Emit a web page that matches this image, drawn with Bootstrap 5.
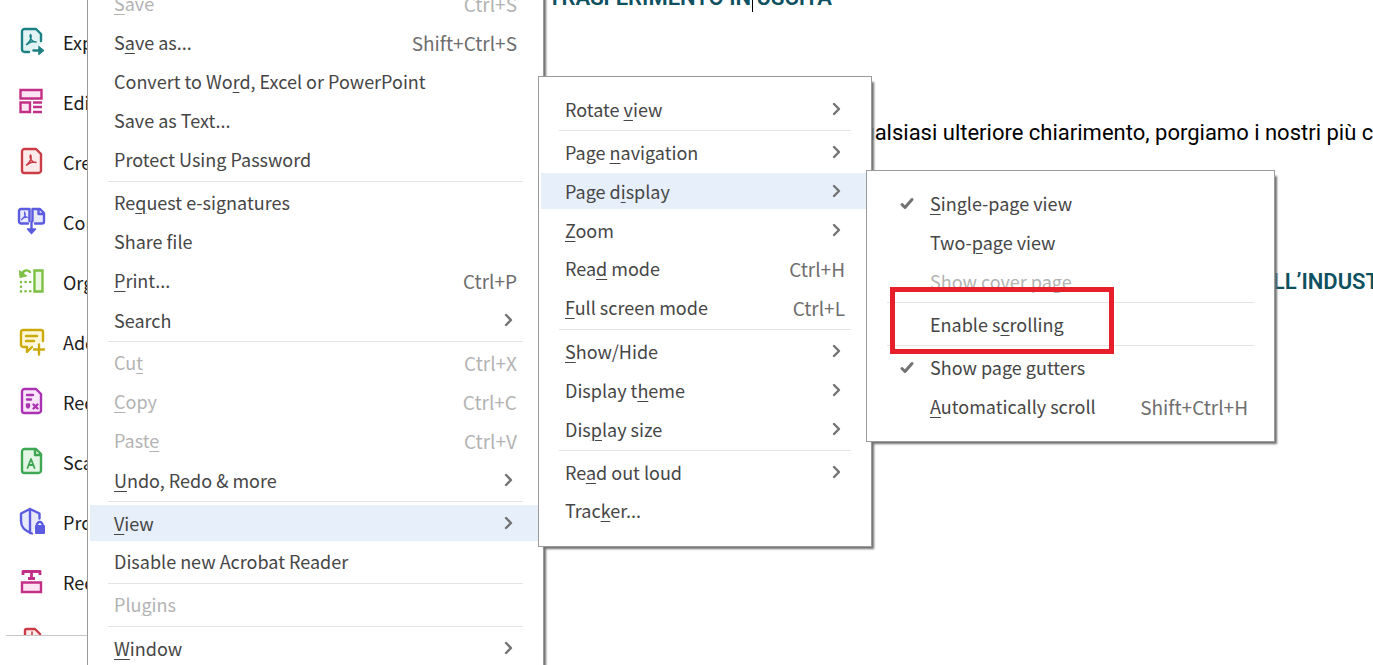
<!DOCTYPE html>
<html lang="en">
<head>
<meta charset="utf-8">
<meta name="viewport" content="width=device-width, initial-scale=1">
<title>Acrobat Reader – View menu</title>
<link href="https://cdn.jsdelivr.net/npm/bootstrap@5.3.0/dist/css/bootstrap.min.css" rel="stylesheet">
<style>
  body { font-family: "Noto Sans CJK SC", "Noto Sans", sans-serif; font-size: 18px; color: #464646; background: #fff; }
  .app { height: 100vh; }

  /* tool list at the left */
  .tools { width: 88px; flex: none; }
  .tool-list { height: 636px; margin-left: 6px; padding-top: 12px; border-bottom: 1px solid #c6c6c6; }
  .tool { height: 60px; padding-left: 9px; color: #1c1c1c; white-space: nowrap; text-decoration: none; }
  .tool svg { width: 32px; height: 32px; margin-right: 16px; flex: none; fill: none; stroke: currentColor; stroke-width: 2.4; stroke-linejoin: round; stroke-linecap: round; }
  .teal { color: #1d8084; } .pink { color: #c22f86; } .crimson { color: #cb3d46; } .indigo { color: #5c5ce0; }
  .lime { color: #7cc043; } .gold { color: #ccaa0c; } .violet { color: #a933b0; } .leaf { color: #3fa653; }

  /* page of the open document */
  .doc { font-family: Roboto, sans-serif; font-size: 22px; line-height: 26px; color: #000; white-space: nowrap; min-width: 0; }
  .doc h2 { font-size: 22px; line-height: 26px; font-weight: 600; color: #0e5161; }
  .doc .first { margin: -15px 0 0 460px; }
  .doc .para { margin: 109px 0 0 762px; }
  .doc .second { margin: 123px 0 0 1158px; }
  .caret { left: 204px; top: 0; width: 1px; height: 27px; background: #000; }

  /* menus */
  .menu { gap: 3px; padding: 14px 2px 17px; background: #fff; border: 1px solid #9b9b9b; box-shadow: 4px 4px 2px -2px #707070; }
  .menu-main { left: 87px; top: -29px; bottom: -40px; width: 457px; }
  .menu-view { left: 538px; top: 76px; width: 334px; }
  .menu-display { left: 866px; top: 170px; width: 409px; }
  .entry { height: 36px; flex: none; padding: 0 24px; border: 0; background: none; color: #464646; line-height: 35px; white-space: nowrap; text-align: left; }
  .entry:not(.d-flex) { padding-bottom: 1px; }
  .menu-display .entry { padding-left: 29px; }
  .entry:disabled { color: #b3b3b3; }
  .entry.open { background: #e6effa; }
  .entry kbd { padding: 0; background: none; color: #6e6e6e; font: inherit; font-size: 19px; }
  .entry:disabled kbd { color: #b3b3b3; }
  .entry u { text-decoration-thickness: 1px; text-underline-offset: 3px; }
  .entry svg { fill: none; stroke: #737373; stroke-width: 2.4; stroke-linecap: round; stroke-linejoin: round; }
  .chev { width: 10px; height: 14px; margin-right: 3px; }
  .tick { width: 32px; height: 14px; flex: none; }
  .entry .tick { stroke-width: 3; }
  .rule { height: 1px; flex: none; margin: 0 18px; background: #e4e4e4; }
  .callout { left: 23px; top: 116px; width: 224px; height: 67px; border: 5px solid #e61f2a; pointer-events: none; }
</style>
</head>
<body>
<div class="app position-relative overflow-hidden d-flex">
  <nav class="tools overflow-hidden" aria-label="Tools">
    <div class="tool-list overflow-hidden">
      <a href="#" class="tool d-flex align-items-center"><svg class="teal" viewBox="0 0 32 32"><path fill="#e2f3f3" stroke="none" d="M7 3h14l5 5v10l-9 8H7z"/><path d="M14 26H9.500a2.500 2.500 0 0 1-2.500-2.500V5.500A2.500 2.500 0 0 1 9.500 3H21l5 5v7"/><path stroke-width="1.500" d="M15.500 8.500c2 3-1 8-4 10M15 9.500c0 4 3 6.500 6 6.500-3-1-7 0-9 2.500"/><path d="M18.500 24.500h8"/><path fill="currentColor" stroke-width="1" d="M24 20.500l5 4-5 4z"/></svg>Export</a>
      <a href="#" class="tool d-flex align-items-center"><svg class="pink" viewBox="0 0 32 32"><path fill="#fce4f3" stroke-linejoin="miter" d="M5.500 4h21v8.500h-21zM5.500 16.500h9.500v9.500H5.500z"/><path stroke-linecap="butt" d="M18 16.500h9M18 21h9M18 26h9"/></svg>Edit</a>
      <a href="#" class="tool d-flex align-items-center"><svg class="crimson" viewBox="0 0 32 32"><path fill="#fdeaea" d="M9.500 3H21l5 5v16.500a2.500 2.500 0 0 1-2.500 2.500h-14A2.500 2.500 0 0 1 7 24.500v-19A2.500 2.500 0 0 1 9.500 3z"/><path stroke-width="1.500" d="M15.500 9c2 3-1 8-4 10M15 10c0 4 3 6.500 6 6.500-3-1-7 0-9 2.500"/></svg>Create</a>
      <a href="#" class="tool d-flex align-items-center"><svg class="indigo" viewBox="0 0 32 32"><path fill="#e9e9fc" stroke="none" d="M4 3h21l4 4v10H4z"/><path d="M13 17.500H6a2 2 0 0 1-2-2V5a2 2 0 0 1 2-2h8.500v12M17.500 15V3H25l4 4v8.500a2 2 0 0 1-2 2h-7M23.500 3v5H29"/><path stroke-width="1.200" d="M9.500 6c2 3-1 6-3 7.500M9.500 7c0 3 2 4.500 4 4.500-3-1-5 0-7 2"/><path d="M16.500 16v10"/><path stroke-width="1.500" d="M12.500 23l4 4.500 4-4.500z" fill="currentColor"/></svg>Combine</a>
      <a href="#" class="tool d-flex align-items-center"><svg class="lime" viewBox="0 0 32 32"><path fill="#ecf8e2" stroke-linejoin="miter" d="M19.500 4.500h8v21h-8z"/><path d="M15 6c-3-3-7-2-9 4"/><path fill="currentColor" stroke-width="1" d="M4.500 5l.5 6.500 6.500-1.500z"/><path stroke-dasharray=".1 4.600" stroke-width="2.600" d="M6 16v10M10.500 16h5M10.500 25.200h5"/></svg>Organize</a>
      <a href="#" class="tool d-flex align-items-center"><svg class="gold" viewBox="0 0 32 32"><path fill="#fff8d8" d="M17 21l-5 5v-5H8a2.500 2.500 0 0 1-2-2V6a2 2 0 0 1 2-2h18a2 2 0 0 1 2 2v9"/><path d="M11 10h11M11 15h8M24 18.500v10M19 23.500h10"/></svg>Add</a>
      <a href="#" class="tool d-flex align-items-center"><svg class="violet" viewBox="0 0 32 32"><path fill="#f9e5fa" d="M9.500 3H21l5 5v16.500a2.500 2.500 0 0 1-2.500 2.500h-14A2.500 2.500 0 0 1 7 24.500v-19A2.500 2.500 0 0 1 9.500 3z"/><path d="M12 9h6M12 13.500h4M12 18.500v2q1 2 2 0v-2zM18.500 18.500l4 4M22.500 18.500l-4 4"/></svg>Request</a>
      <a href="#" class="tool d-flex align-items-center"><svg class="leaf" viewBox="0 0 32 32"><path fill="#e3f5e5" d="M9.500 3H21l5 5v16.500a2.500 2.500 0 0 1-2.500 2.500h-14A2.500 2.500 0 0 1 7 24.500v-19A2.500 2.500 0 0 1 9.500 3z"/><path d="M20 3v6h6"/><path stroke-width="1.800" d="M12.500 22l3.500-9 3.500 9M14 19h4"/></svg>Scan</a>
      <a href="#" class="tool d-flex align-items-center"><svg class="indigo" viewBox="0 0 32 32"><path fill="#e9e9fc" stroke="none" d="M6 7l9-4 9 4v9l-7 11C10 25 6 21 6 15z"/><path d="M17 27.500C9 24 6 21 6 15V7.500L15 3l9.500 4.500v5M15 3v24"/><path fill="currentColor" stroke-width="2" d="M21 20h8v7h-8z"/><path d="M22 20v-2q3-4.500 5.500 0v2"/></svg>Protect</a>
      <a href="#" class="tool d-flex align-items-center"><svg class="pink" viewBox="0 0 32 32"><path fill="#fce4f3" stroke-linejoin="miter" d="M7 16.500h19v9.500H7z"/><path stroke-linecap="butt" stroke-width="2.800" d="M8 9V5.500h17V9M16.500 5v8M13 12.500h7"/></svg>Redact</a>
      <a href="#" class="tool d-flex align-items-center" aria-label="Compress a PDF"><svg class="crimson" viewBox="0 0 32 32"><path fill="#fdeaea" d="M10 27V4.500A1.500 1.500 0 0 1 11.500 3H20l5 5v19z"/><path stroke-width="1.500" d="M17 6v5"/></svg></a>
    </div>
  </nav>

  <main class="doc flex-grow-1">
    <h2 class="first position-relative">TRASFERIMENTO IN USCITA<span class="caret position-absolute"></span></h2>
    <p class="para">qualsiasi ulteriore chiarimento, porgiamo i nostri più cordiali saluti</p>
    <h2 class="second">DELL’INDUSTRIA</h2>
  </main>

  <div class="menu menu-main position-absolute d-flex flex-column" role="menu">
    <button class="entry d-flex justify-content-between" disabled><span><u>S</u>ave</span><kbd>Ctrl+S</kbd></button>
    <button class="entry d-flex justify-content-between"><span>S<u>a</u>ve as...</span><kbd>Shift+Ctrl+S</kbd></button>
    <button class="entry"><span>Convert to Wo<u>r</u>d, Excel or PowerPoint</span></button>
    <button class="entry">Save as Text...</button>
    <button class="entry">Protect Using Password</button>
    <div class="rule"></div>
    <button class="entry"><span>Re<u>q</u>uest e-signatures</span></button>
    <button class="entry">Share file</button>
    <button class="entry d-flex justify-content-between"><span><u>P</u>rint...</span><kbd>Ctrl+P</kbd></button>
    <button class="entry d-flex justify-content-between align-items-center">Search<svg class="chev" viewBox="0 0 10 14"><path d="M2 2l5 5-5 5"/></svg></button>
    <div class="rule"></div>
    <button class="entry d-flex justify-content-between" disabled><span>Cu<u>t</u></span><kbd>Ctrl+X</kbd></button>
    <button class="entry d-flex justify-content-between" disabled><span><u>C</u>opy</span><kbd>Ctrl+C</kbd></button>
    <button class="entry d-flex justify-content-between" disabled><span>Past<u>e</u></span><kbd>Ctrl+V</kbd></button>
    <button class="entry d-flex justify-content-between align-items-center"><span><u>U</u>ndo, Redo &amp; more</span><svg class="chev" viewBox="0 0 10 14"><path d="M2 2l5 5-5 5"/></svg></button>
    <div class="rule"></div>
    <button class="entry open d-flex justify-content-between align-items-center"><span><u>V</u>iew</span><svg class="chev" viewBox="0 0 10 14"><path d="M2 2l5 5-5 5"/></svg></button>
    <button class="entry">Disable new Acrobat Reader</button>
    <div class="rule"></div>
    <button class="entry" disabled><span>Plu<u>g</u>ins</span></button>
    <div class="rule"></div>
    <button class="entry d-flex justify-content-between align-items-center"><span><u>W</u>indow</span><svg class="chev" viewBox="0 0 10 14"><path d="M2 2l5 5-5 5"/></svg></button>
  </div>

  <div class="menu menu-view position-absolute d-flex flex-column" role="menu">
    <button class="entry d-flex justify-content-between align-items-center"><span>Rotate <u>v</u>iew</span><svg class="chev" viewBox="0 0 10 14"><path d="M2 2l5 5-5 5"/></svg></button>
    <div class="rule"></div>
    <button class="entry d-flex justify-content-between align-items-center"><span>Page <u>n</u>avigation</span><svg class="chev" viewBox="0 0 10 14"><path d="M2 2l5 5-5 5"/></svg></button>
    <button class="entry open d-flex justify-content-between align-items-center"><span>Page d<u>i</u>splay</span><svg class="chev" viewBox="0 0 10 14"><path d="M2 2l5 5-5 5"/></svg></button>
    <button class="entry d-flex justify-content-between align-items-center"><span><u>Z</u>oom</span><svg class="chev" viewBox="0 0 10 14"><path d="M2 2l5 5-5 5"/></svg></button>
    <button class="entry d-flex justify-content-between"><span>Rea<u>d</u> mode</span><kbd>Ctrl+H</kbd></button>
    <button class="entry d-flex justify-content-between"><span><u>F</u>ull screen mode</span><kbd>Ctrl+L</kbd></button>
    <div class="rule"></div>
    <button class="entry d-flex justify-content-between align-items-center"><span><u>S</u>how/Hide</span><svg class="chev" viewBox="0 0 10 14"><path d="M2 2l5 5-5 5"/></svg></button>
    <button class="entry d-flex justify-content-between align-items-center"><span>Display t<u>h</u>eme</span><svg class="chev" viewBox="0 0 10 14"><path d="M2 2l5 5-5 5"/></svg></button>
    <button class="entry d-flex justify-content-between align-items-center"><span>Dis<u>p</u>lay size</span><svg class="chev" viewBox="0 0 10 14"><path d="M2 2l5 5-5 5"/></svg></button>
    <div class="rule"></div>
    <button class="entry d-flex justify-content-between align-items-center"><span>Re<u>a</u>d out loud</span><svg class="chev" viewBox="0 0 10 14"><path d="M2 2l5 5-5 5"/></svg></button>
    <button class="entry"><span>Trac<u>k</u>er...</span></button>
  </div>

  <div class="menu menu-display position-absolute d-flex flex-column" role="menu">
    <button class="entry d-flex align-items-center" role="menuitemcheckbox" aria-checked="true"><svg class="tick" viewBox="0 0 32 14"><path d="M4 8.500l3 3 7-8"/></svg><span><u>S</u>ingle-page view</span></button>
    <button class="entry d-flex align-items-center" role="menuitemcheckbox" aria-checked="false"><span class="tick"></span><span>Two-<u>p</u>age view</span></button>
    <button class="entry d-flex align-items-center" disabled role="menuitemcheckbox" aria-checked="false"><span class="tick"></span><span>Show cover page</span></button>
    <div class="rule"></div>
    <button class="entry d-flex align-items-center" role="menuitemcheckbox" aria-checked="false"><span class="tick"></span><span>Enable s<u>c</u>rolling</span></button>
    <div class="rule"></div>
    <button class="entry d-flex align-items-center" role="menuitemcheckbox" aria-checked="true"><svg class="tick" viewBox="0 0 32 14"><path d="M4 8.500l3 3 7-8"/></svg><span>Show page <u>g</u>utters</span></button>
    <button class="entry d-flex align-items-center" role="menuitemcheckbox" aria-checked="false"><span class="tick"></span><span><u>A</u>utomatically scroll</span><kbd class="ms-auto">Shift+Ctrl+H</kbd></button>
    <div class="callout position-absolute"></div>
  </div>
</div>
<script src="https://cdn.jsdelivr.net/npm/bootstrap@5.3.0/dist/js/bootstrap.bundle.min.js"></script>
</body>
</html>
